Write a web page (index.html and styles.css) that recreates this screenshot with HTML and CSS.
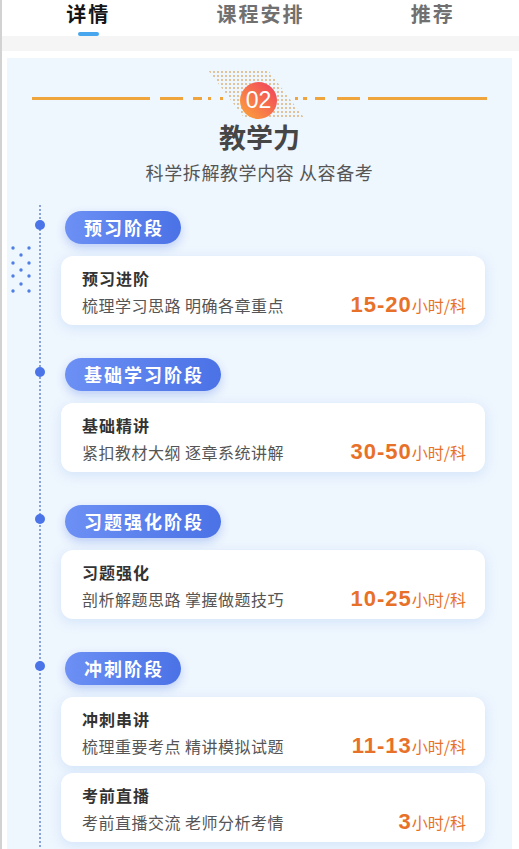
FILE: index.html
```html
<!DOCTYPE html>
<html lang="zh-CN">
<head>
  <meta charset="UTF-8">
  <meta name="viewport" content="width=device-width, initial-scale=1.0">
  <title>教学力</title>
  <link rel="stylesheet" href="styles.css">
</head>
<body>
  <div class="page">
    <!-- Top tabs -->
    <nav class="tabs">
      <div class="tab active">
        <span>详情</span>
        <i class="tab-bar"></i>
      </div>
      <div class="tab"><span>课程安排</span></div>
      <div class="tab"><span>推荐</span></div>
    </nav>
    <div class="divider"></div>

    <section class="panel">
      <!-- Section number with dashed rule -->
      <div class="rule">
        <svg class="rule-line" width="191" height="3" viewBox="0 0 191 3">
          <g stroke="#f0a43c" stroke-width="3">
            <line x1="0" y1="1.5" x2="118" y2="1.5"/>
            <line x1="128" y1="1.5" x2="151" y2="1.5"/>
            <line x1="161" y1="1.5" x2="170" y2="1.5"/>
            <line x1="176" y1="1.5" x2="179" y2="1.5"/>
            <line x1="188" y1="1.5" x2="191" y2="1.5"/>
          </g>
        </svg>
        <div class="badge"><span>02</span></div>
        <svg class="rule-line" width="192" height="3" viewBox="0 0 192 3">
          <g stroke="#f0a43c" stroke-width="3">
            <line x1="0" y1="1.5" x2="3" y2="1.5"/>
            <line x1="8" y1="1.5" x2="12" y2="1.5"/>
            <line x1="20" y1="1.5" x2="30" y2="1.5"/>
            <line x1="42" y1="1.5" x2="65" y2="1.5"/>
            <line x1="73" y1="1.5" x2="192" y2="1.5"/>
          </g>
        </svg>
      </div>
      <h2 class="title">教学力</h2>
      <p class="subtitle">科学拆解教学内容 从容备考</p>

      <!-- Study stages -->
      <div class="timeline">
        <svg class="deco-dots" width="20" height="50" viewBox="0 0 20 50">
          <g fill="#4f7fe2">
            <circle cx="2" cy="3" r="1.7"/>
            <circle cx="2" cy="18" r="1.7"/>
            <circle cx="2" cy="31" r="1.7"/>
            <circle cx="2" cy="46" r="1.7"/>
            <circle cx="10" cy="10" r="1.7"/>
            <circle cx="10" cy="25" r="1.7"/>
            <circle cx="10" cy="39" r="1.7"/>
            <circle cx="18" cy="3" r="1.7"/>
            <circle cx="18" cy="18" r="1.7"/>
            <circle cx="18" cy="31" r="1.7"/>
            <circle cx="18" cy="46" r="1.7"/>
          </g>
        </svg>

        <div class="stage">
          <div class="stage-tag">预习阶段</div>
          <div class="card">
            <div class="card-info">
              <div class="card-title">预习进阶</div>
              <div class="card-desc">梳理学习思路 明确各章重点</div>
            </div>
            <div class="hours"><b>15-20</b>小时/科</div>
          </div>
        </div>

        <div class="stage">
          <div class="stage-tag">基础学习阶段</div>
          <div class="card">
            <div class="card-info">
              <div class="card-title">基础精讲</div>
              <div class="card-desc">紧扣教材大纲 逐章系统讲解</div>
            </div>
            <div class="hours"><b>30-50</b>小时/科</div>
          </div>
        </div>

        <div class="stage">
          <div class="stage-tag">习题强化阶段</div>
          <div class="card">
            <div class="card-info">
              <div class="card-title">习题强化</div>
              <div class="card-desc">剖析解题思路 掌握做题技巧</div>
            </div>
            <div class="hours"><b>10-25</b>小时/科</div>
          </div>
        </div>

        <div class="stage">
          <div class="stage-tag">冲刺阶段</div>
          <div class="card">
            <div class="card-info">
              <div class="card-title">冲刺串讲</div>
              <div class="card-desc">梳理重要考点 精讲模拟试题</div>
            </div>
            <div class="hours"><b>11-13</b>小时/科</div>
          </div>
          <div class="card card-next">
            <div class="card-info">
              <div class="card-title">考前直播</div>
              <div class="card-desc">考前直播交流 老师分析考情</div>
            </div>
            <div class="hours"><b>3</b>小时/科</div>
          </div>
        </div>
      </div>
    </section>
  </div>
</body>
</html>
```

FILE: styles.css
```css
/* General styles */
body {
  margin: 0;
  background-color: #fff;
  font-family: "Noto Sans CJK SC", "Noto Sans", sans-serif;
  color: #333;
}

.page {
  height: 849px;
  overflow: hidden;
  border-left: 2px solid #d2d2d2;
}

/* Tabs */
.tabs {
  display: grid;
  grid-template-columns: repeat(3, 1fr);
  height: 36px;
}

.tab {
  display: flex;
  flex-direction: column;
  align-items: center;
  font-size: 20px;
  line-height: 27px;
  font-weight: 700;
  letter-spacing: 2px;
  color: #707070;
}

.tab.active {
  color: #151515;
}

.tab-bar {
  display: block;
  width: 21px;
  height: 4px;
  margin-top: 5px;
  border-radius: 2px;
  background-color: #47a6ee;
}

.divider {
  height: 15px;
  background-color: #f5f5f5;
}

/* Light blue content panel */
.panel {
  margin: 7px 7px 0 5px;
  padding-bottom: 20px;
  background-color: #eef6fe;
}

/* Number badge + dashed rule */
.rule {
  display: flex;
  align-items: flex-start;
  padding: 24px 25px 0;
  isolation: isolate;
}

.rule-line {
  display: block;
  margin-top: 15px;
}

.badge {
  position: relative;
  width: 37px;
  height: 37px;
  margin: 0 18px 0 17px;
  border-radius: 50%;
  background: linear-gradient(225deg, #f03d5e 0%, #fca739 100%);
  color: #fff;
  font-family: "Liberation Sans", Arial, sans-serif;
  font-size: 23px;
  line-height: 37px;
  text-align: center;
}

/* dotted slanted band behind the badge */
.badge::before {
  content: "";
  position: absolute;
  left: -32px;
  top: -12px;
  width: 97px;
  height: 49px;
  z-index: -1;
  clip-path: polygon(0 0, 60px 0, 97px 100%, 37px 100%);
  background-image: radial-gradient(circle, #e1c39b 0.9px, transparent 1.3px);
  background-size: 4px 4px;
}

.title {
  margin: 0;
  font-size: 27px;
  line-height: 36px;
  font-weight: 700;
  color: #464646;
  text-align: center;
}

.subtitle {
  margin: 4px 0 0;
  font-size: 18px;
  line-height: 26px;
  letter-spacing: 0.6px;
  color: #555;
  text-align: center;
}

/* Timeline */
.timeline {
  position: relative;
  margin-top: 20px;
  padding: 6px 27px 0 54px;
}

.timeline::before {
  content: "";
  position: absolute;
  left: 32px;
  top: 0;
  bottom: -40px;
  width: 2px;
  background: repeating-linear-gradient(to bottom, #8aa2d6 0 2px, transparent 2px 4px);
}

.deco-dots {
  position: absolute;
  left: 4px;
  top: 40px;
}

.stage {
  position: relative;
  display: flex;
  flex-direction: column;
  align-items: flex-start;
  margin-bottom: 33px;
}

.stage:last-child {
  margin-bottom: 0;
}

.stage::before {
  content: "";
  position: absolute;
  left: -26px;
  top: 9px;
  width: 10px;
  height: 10px;
  border-radius: 50%;
  background-color: #4a74e8;
}

.stage-tag {
  height: 33px;
  margin-left: 4px;
  padding: 0 17px 0 19px;
  border-radius: 17px;
  background: linear-gradient(90deg, #6c90f4 0%, #4b72e6 100%);
  box-shadow: 0 4px 10px rgba(76, 116, 230, 0.3);
  color: #fff;
  font-size: 18px;
  line-height: 33px;
  font-weight: 700;
  letter-spacing: 2px;
}

.card {
  align-self: stretch;
  display: flex;
  justify-content: space-between;
  align-items: flex-end;
  margin-top: 12px;
  padding: 10px 19px 8px 21px;
  border-radius: 12px;
  background-color: #fff;
  box-shadow: 0 3px 12px rgba(160, 195, 240, 0.35);
}

.card-next {
  margin-top: 7px;
}

.card-title {
  font-size: 16px;
  line-height: 24px;
  font-weight: 700;
  letter-spacing: 1px;
  color: #333;
}

.card-desc {
  margin-top: 3px;
  font-size: 16px;
  line-height: 24px;
  letter-spacing: 0.5px;
  color: #555;
}

.hours {
  font-size: 16px;
  line-height: 24px;
  color: #e8712a;
  white-space: nowrap;
}

.hours b {
  font-family: "Liberation Sans", Arial, sans-serif;
  font-size: 22px;
  letter-spacing: 1px;
}
```
